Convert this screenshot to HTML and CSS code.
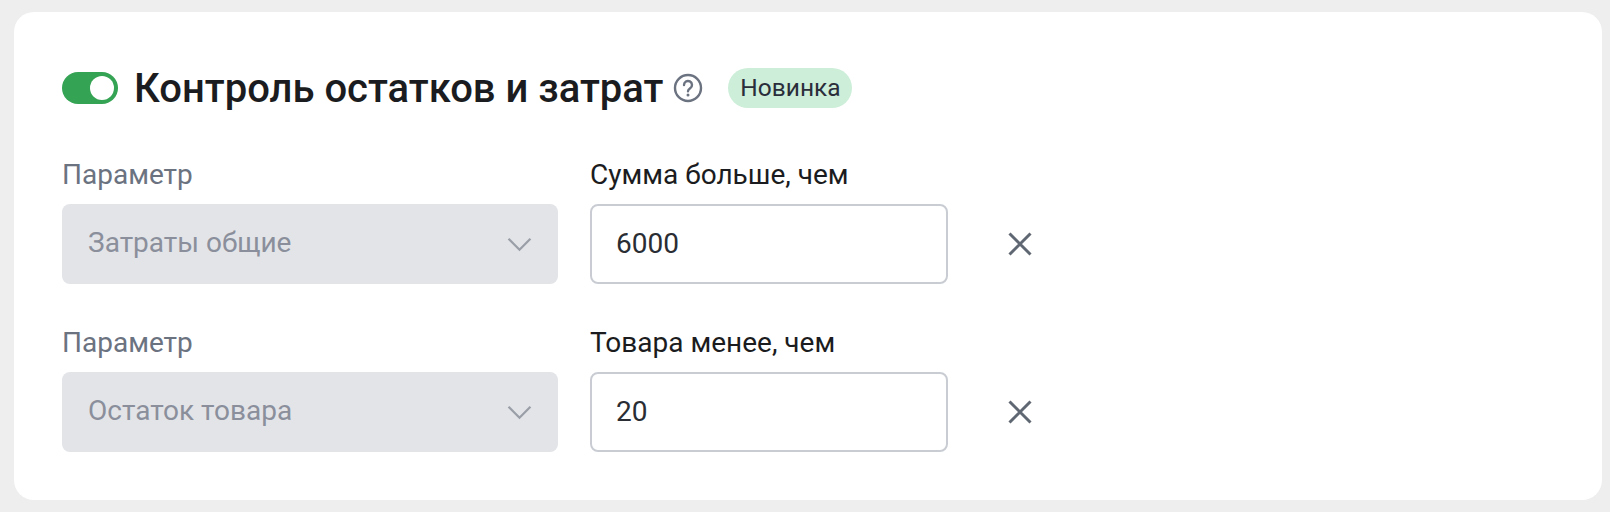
FILE: index.html
```html
<!DOCTYPE html>
<html lang="ru">
<head>
<meta charset="utf-8">
<title>Контроль остатков и затрат</title>
<link rel="stylesheet" href="styles.css">
</head>
<body>
<main class="card">
  <header class="head">
    <span class="toggle"><span class="knob"></span></span>
    <h2 class="title">Контроль остатков и затрат</h2>
    <svg class="help" viewBox="0 0 30 30" fill="none"><circle cx="15" cy="15" r="13" stroke="#6b7280" stroke-width="2.4"/><path d="M11 12a4 4 0 1 1 6.2 3.3c-1.3.9-2.2 1.5-2.2 3" stroke="#6b7280" stroke-width="2.4" stroke-linecap="round"/><circle cx="15" cy="22" r="1.5" fill="#6b7280"/></svg>
    <span class="badge">Новинка</span>
  </header>
  <section class="row">
    <div class="field field-select">
      <label class="label label-muted">Параметр</label>
      <div class="select"><span class="select-text">Затраты общие</span>
        <svg class="chev" viewBox="0 0 24 14" fill="none"><path d="M1.5 1.5 12 12 22.5 1.5" stroke="#9a9ea7" stroke-width="2.2"/></svg>
      </div>
    </div>
    <div class="field field-input">
      <label class="label">Сумма больше, чем</label>
      <div class="input">6000</div>
    </div>
    <svg class="close" viewBox="0 0 24 24" fill="none"><path d="M1.5 1.5 22.5 22.5M22.5 1.5 1.5 22.5" stroke="#5f6772" stroke-width="3"/></svg>
  </section>
  <section class="row">
    <div class="field field-select">
      <label class="label label-muted">Параметр</label>
      <div class="select"><span class="select-text">Остаток товара</span>
        <svg class="chev" viewBox="0 0 24 14" fill="none"><path d="M1.5 1.5 12 12 22.5 1.5" stroke="#9a9ea7" stroke-width="2.2"/></svg>
      </div>
    </div>
    <div class="field field-input">
      <label class="label">Товара менее, чем</label>
      <div class="input">20</div>
    </div>
    <svg class="close" viewBox="0 0 24 24" fill="none"><path d="M1.5 1.5 22.5 22.5M22.5 1.5 1.5 22.5" stroke="#5f6772" stroke-width="3"/></svg>
  </section>
</main>
</body>
</html>
```

FILE: styles.css
```css
* { box-sizing: border-box; }
html, body { margin: 0; height: 100%; }
body {
  background: #eeeeee;
  padding: 12px 8px 12px 14px;
  font-family: Roboto, "Liberation Sans", sans-serif;
  color: #1b1c20;
  overflow: hidden;
}
.card {
  background: #fff;
  border-radius: 20px;
  height: 488px;
  padding: 56px 48px 0;
}
.head {
  display: flex;
  align-items: center;
  height: 40px;
  margin-bottom: 56px;
}
.toggle {
  width: 56px;
  height: 32px;
  border-radius: 16px;
  background: #34a353;
  display: flex;
  align-items: center;
  justify-content: flex-end;
  padding-right: 4px;
}
.knob { width: 24px; height: 24px; border-radius: 50%; background: #fff; }
.title {
  margin: 2px 0 0 16px;
  font-size: 40px;
  font-weight: 500;
  line-height: 40px;
}
.help { width: 30px; height: 30px; margin-left: 10px; }
.badge {
  margin-left: 25px;
  width: 124px;
  height: 40px;
  border-radius: 20px;
  background: #cdeed8;
  font-size: 24.5px;
  line-height: 40px;
  text-align: center;
  color: #2a2d3a;
}
.row {
  display: flex;
  align-items: flex-end;
  height: 120px;
  margin-bottom: 48px;
}
.field { display: flex; flex-direction: column; }
.field-select { width: 496px; margin-right: 32px; }
.field-input { width: 358px; }
.label { font-size: 28px; line-height: 32px; margin-bottom: 13px; }
.label-muted { color: #6b7280; }
.select, .input {
  height: 80px;
  border-radius: 8px;
  font-size: 28px;
  display: flex;
  align-items: center;
  padding: 0 26px;
}
.select {
  background: #e3e4e8;
  color: #8a8f9b;
  justify-content: space-between;
}
.select-text { margin-bottom: 4px; }
.input { border: 2px solid #c9cdd3; background: #fff; color: #2a2d33; padding: 0 24px 2px; }
.chev { width: 25px; height: 15px; flex: none; }
.close { width: 24px; height: 24px; margin: 0 0 28px 60px; flex: none; }
```
